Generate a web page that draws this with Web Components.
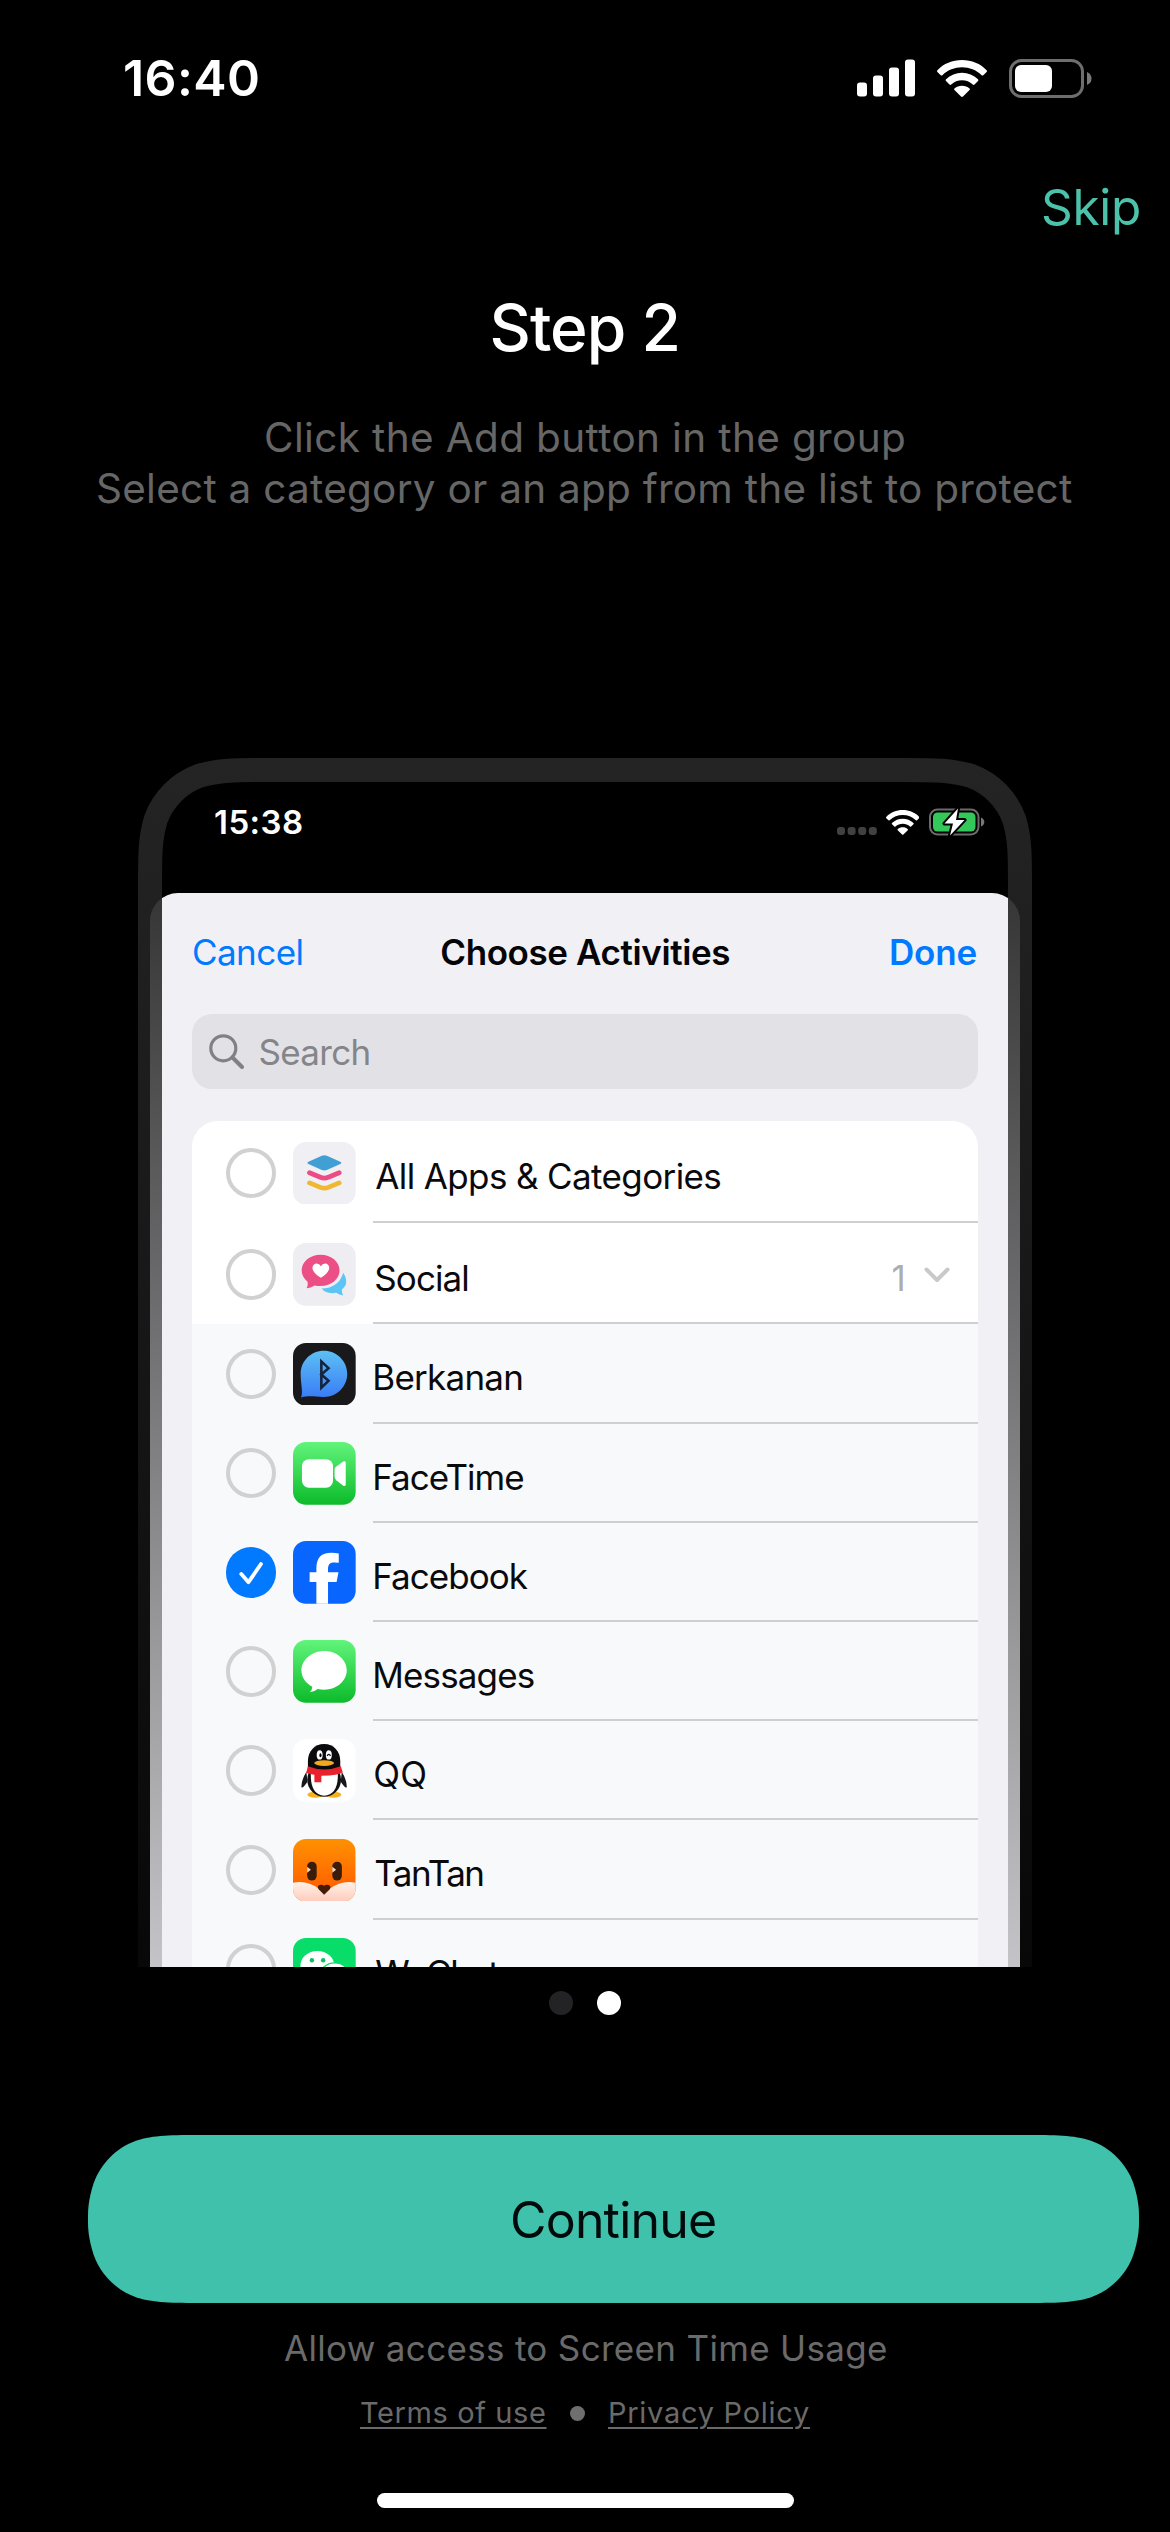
<!DOCTYPE html>
<html lang="en">
<head>
<meta charset="utf-8">
<title>Step 2</title>
<style>
html,body{margin:0;background:#000}
body{font-family:Inter,"Liberation Sans",sans-serif;width:1170px;height:2532px;overflow:hidden}
</style>
</head>
<body>
<onboarding-page></onboarding-page>
<script>
const define=(name,html,ready)=>{
  const t=document.createElement('template');
  t.innerHTML=html;
  customElements.define(name,class extends HTMLElement{
    constructor(){super();this.attachShadow({mode:'open'}).append(t.content.cloneNode(true));}
    connectedCallback(){if(ready)ready.call(this,this.shadowRoot);}
  });
};

/* A single line of text whose tracking is set so that its ink spans "width" pixels. */
const pen=document.createElement('canvas').getContext('2d');
define('fit-text',`<style>:host{display:block;flex:none;white-space:pre;font-kerning:normal}</style><slot></slot>`,function(){
  const s=getComputedStyle(this),text=this.textContent,w=+this.getAttribute('width');
  pen.font=`${s.fontWeight} ${s.fontSize} ${s.fontFamily}`;
  const m=pen.measureText(text),l=m.actualBoundingBoxLeft,r=m.actualBoundingBoxRight;
  const gap=text.length>1?(w-l-r)/(text.length-1):0;
  this.style.letterSpacing=gap+'px';
  this.style.marginLeft=l+'px';
  this.style.marginRight=(r-m.width-gap)+'px';
});

define('wifi-icon',`<style>:host{display:block}svg{display:block;width:100%;height:100%}</style>
<svg viewBox="0 0 50 37" fill="#fff"><path d="M25 0C34.500 0 43.500 3.700 49.600 10.200Q50.400 11.100 49.600 12L46.300 15.200Q45.500 16 44.600 15.200C39.200 10 32.400 7.300 25 7.300S10.800 10 5.400 15.200Q4.500 16 3.700 15.200L.4 12Q-.4 11.100 .4 10.200C6.500 3.700 15.500 0 25 0Z"/><path d="M25 12.800C31 12.800 36.600 15.100 41 19.200Q41.900 20.100 41 21L37.500 24.500Q36.700 25.300 35.800 24.500C32.900 21.800 29.100 20.300 25 20.300S17.100 21.800 14.200 24.500Q13.300 25.300 12.500 24.500L9 21Q8.100 20.100 9 19.200C13.400 15.100 19 12.800 25 12.800Z"/><path d="M25 25.700C27.900 25.700 30.500 26.700 32.500 28.500Q33.300 29.200 32.500 30L26 36.500Q25 37.400 24 36.500L17.500 30Q16.700 29.200 17.500 28.500C19.500 26.700 22.100 25.700 25 25.700Z"/></svg>`);

define('status-bar',`<style>
:host{display:flex;align-items:center;height:156px;padding:0 78px 0 125px;box-sizing:border-box;color:#fff}
fit-text{font-size:50px;font-weight:600;line-height:60px}
.r{margin-left:auto;display:flex;align-items:center}
wifi-icon{width:50px;height:37px;margin:0 22px 0 22.5px}
</style>
<fit-text width="133">16:40</fit-text>
<div class="r">
<svg width="58" height="38" fill="#fff"><rect x="0" y="23.500" width="10" height="14" rx="3"/><rect x="16" y="16.500" width="10" height="21" rx="3"/><rect x="32" y="8.500" width="10" height="29" rx="3"/><rect x="48" y=".5" width="10" height="37" rx="3"/></svg>
<wifi-icon></wifi-icon>
<svg width="83" height="39"><rect x="1.500" y="1.500" width="72" height="36" rx="11" fill="none" stroke="#6e6e6e" stroke-width="3"/><path d="M78 13Q82.500 15 82.500 19.500T78 26Z" fill="#7a7a7a"/><rect x="6" y="6" width="37" height="27" rx="6" fill="#fff"/></svg>
</div>`);

define('step-heading',`<style>
:host{display:block}
.row{display:flex;justify-content:center}
.skip{justify-content:flex-end;padding:0 31px 3px 0;box-sizing:border-box;height:105px;align-items:center;color:#4cc2aa;font-size:49.5px}
.title{height:134px;align-items:center;box-sizing:border-box;padding-bottom:2px;font-size:64px;font-weight:500;color:#fff;margin-bottom:17px}
.sub{font-size:40.500px;line-height:51px;color:#666}
</style>
<div class="row skip"><fit-text width="96">Skip</fit-text></div>
<div class="row title"><fit-text width="185">Step 2</fit-text></div>
<div class="row sub"><fit-text width="638">Click the Add button in the group</fit-text></div>
<div class="row sub"><fit-text width="974">Select a category or an app from the list to protect</fit-text></div>`);

const art={
layers:`<rect width="63" height="63" rx="13" fill="#f0eff4"/><path d="M29 13.800Q31.500 12.800 34 13.800L47.500 19.800Q49.500 21 47.500 22.200L34 28.200Q31.500 29.200 29 28.200L15.500 22.200Q13.500 21 15.500 19.800Z" fill="#419fd3"/><g fill="none" stroke-width="4.800" stroke-linecap="round" stroke-linejoin="round"><path d="M16.600 30.900L27.500 35.400Q31.500 37 35.500 35.400L46.400 30.900" stroke="#ee4b84"/><path d="M16.600 41.100L27.500 45.600Q31.500 47.200 35.500 45.600L46.400 41.100" stroke="#f0b730"/></g>`,
social:`<rect width="63" height="63" rx="13" fill="#eeedf1"/><path d="M50.500 30Q54.500 36 53 42Q51.500 45 49 47Q49 50 50.500 52.800Q45.500 51.800 43.500 50Q34 52 28.700 45.800Q46 45.500 50.500 30Z" fill="#5cc5f3"/><path d="M27.700 11.700C38.500 11.700 46.800 18.700 46.800 27.500S38.500 43.300 27.700 43.300Q24.500 43.300 21.700 42.600Q18 45 13.700 45.600Q15.300 43 14.600 39C10.900 36.100 8.700 32 8.700 27.500C8.700 18.700 17 11.700 27.700 11.700Z" fill="#ec4f86"/><path d="M28 35C15.500 27.500 19.500 20.500 23.700 20.500Q26.700 20.500 28 23.300Q29.300 20.500 32.300 20.500C36.500 20.500 40.500 27.500 28 35Z" fill="#fff"/>`,
berkanan:`<defs><linearGradient id="g" x2="0" y2="1"><stop stop-color="#5dbff3"/><stop offset="1" stop-color="#397df7"/></linearGradient></defs><rect width="63" height="63" rx="13" fill="#19191b"/><path d="M31 7.700C44 7.700 54.500 18 54.500 31S44 54.300 31 54.300C22 54.300 17 52.500 8 54.700C10.500 50 7.700 42 7.700 31C7.700 18 18 7.700 31 7.700Z" fill="url(#g)"/><path d="M28.500 18.500V45L35.700 38L28.500 31.700L35.700 25.300Z" fill="none" stroke="#16233a" stroke-width="2.600"/>`,
facetime:`<defs><linearGradient id="g" x2="0" y2="1"><stop stop-color="#62f47b"/><stop offset="1" stop-color="#0cbb2a"/></linearGradient></defs><rect width="63" height="63" rx="13" fill="url(#g)"/><rect x="9" y="17.300" width="31.200" height="28.600" rx="7" fill="#fff"/><path d="M41.800 28Q41.800 26 43.500 24.700L50.500 19.600Q53 18.500 53 21V42.500Q53 45 50.500 43.900L43.500 38.500Q41.800 37 41.800 35Z" fill="#fff"/>`,
facebook:`<rect width="63" height="63" rx="13" fill="#0866ff"/><path d="M23.500 63V41.300H16.700V31.500H23.500V28C23.500 16.500 28.500 11.800 38.500 11.800Q43 11.800 46 12.600V21.800Q44 21.500 41.700 21.500C37 21.500 35.200 23.400 35.200 28.300V31.500H45.700L43.800 41.300H35.200V63Z" fill="#fff"/>`,
messages:`<defs><linearGradient id="g" x2="0" y2="1"><stop stop-color="#62f47b"/><stop offset="1" stop-color="#0cbb2a"/></linearGradient></defs><rect width="63" height="63" rx="13" fill="url(#g)"/><path d="M31.500 11C44 11 54 19.700 54 30.500S44 50 31.500 50Q28 50 24.800 49.200Q21.500 52 16.800 52.600Q19.400 50.200 19.400 46.900C12.500 43.400 8.500 37.400 8.500 30.500C8.500 19.700 19 11 31.500 11Z" fill="#fff"/>`,
qq:`<rect width="63" height="63" rx="13" fill="#fff"/><ellipse cx="22.500" cy="56" rx="8" ry="3" fill="#f5b11e"/><ellipse cx="40.500" cy="56" rx="8" ry="3" fill="#f5b11e"/><path d="M13.500 33Q8 42 8.500 48.500Q10 50 14.500 43Z M49 33Q54.500 42 54 48.500Q52.500 50 48 43Z" fill="#15171c"/><ellipse cx="31.300" cy="41" rx="17" ry="17" fill="#111"/><path d="M31.300 5C41 5 47.500 12.500 47.500 22V31H15V22C15 12.500 21.500 5 31.300 5Z" fill="#0b0b0d"/><path d="M18 34H45Q46 56 31.300 57Q17 56 18 34Z" fill="#fff"/><path d="M15 27.500Q31 34 48 27.500L50 33.500Q46 37 28.500 37V43.500H21.500V36Q16 35.500 13.200 34Z" fill="#e9212c"/><ellipse cx="26.800" cy="16" rx="3" ry="4.700" fill="#fff"/><ellipse cx="36" cy="16" rx="3" ry="4.700" fill="#fff"/><ellipse cx="27.600" cy="16.400" rx="1.100" ry="2" /><path d="M34.300 17Q36 14 37.700 17" fill="none" stroke="#111" stroke-width="1.300"/><ellipse cx="31.300" cy="24.200" rx="10" ry="2.900" fill="#f2aa1d"/>`,
tantan:`<defs><linearGradient id="g" x2="0" y2="1"><stop stop-color="#ff9100"/><stop offset=".75" stop-color="#ff6400"/></linearGradient><linearGradient id="h" x2="0" y2="1"><stop stop-color="#fff1e8"/><stop offset="1" stop-color="#ffcbbb"/></linearGradient><clipPath id="c"><rect width="63" height="63" rx="13"/></clipPath></defs><g clip-path="url(#c)"><rect width="63" height="63" fill="url(#g)"/><path d="M0 44Q14 41 26 50L31.500 54L37 50Q49 41 63 44V63H0Z" fill="url(#h)"/></g><path d="M31.300 56L25.700 50.500Q23.500 46.500 28 46Q30.300 46 31.300 47Q32.300 46 34.600 46Q39 46.500 37 50.500Z" fill="#451c08"/><rect x="14.200" y="22.800" width="9.600" height="19" rx="4.800" fill="#3a1c0c"/><rect x="39.500" y="22.800" width="9.600" height="19" rx="4.800" fill="#3a1c0c"/><path d="M14.200 28L18 31L14.200 34Z M39.500 28L43.300 31L39.500 34Z" fill="#ffdcb8"/>`,
wechat:`<rect width="63" height="63" rx="13" fill="#07dd68"/><ellipse cx="24.500" cy="28" rx="17" ry="15" fill="#fff"/><ellipse cx="42" cy="39" rx="15.500" ry="14" fill="#fff" stroke="#07dd68" stroke-width="1.500"/><circle cx="19" cy="22.300" r="2.200" fill="#07c160"/><circle cx="30.300" cy="22.300" r="2.200" fill="#07c160"/>`
};
define('app-icon',`<style>:host{display:block;flex:none;width:62.700px;height:62.700px}svg{display:block;width:100%;height:100%}</style>`,function(root){
  const name=this.getAttribute('name');
  if(!art[name])return;
  const d=document.createElement('div');
  d.innerHTML=`<svg viewBox="0 0 63 63">${art[name]}</svg>`;
  root.append(d.firstChild);
});

define('check-mark',`<style>:host{display:block;flex:none;box-sizing:border-box;width:50.600px;height:50.600px;border:4px solid #d1d1d2;border-radius:50%}
svg{display:none}:host([checked]){border:0;background:#017aff}:host([checked]) svg{display:block}</style>
<svg width="50.600" height="50.600" viewBox="0 0 50.600 50.600" fill="none" stroke="#fff" stroke-width="3.800" stroke-linecap="round" stroke-linejoin="round"><path d="M15.300 27L22.500 35.200L35 17"/></svg>`);

define('app-row',`<style>
:host{display:flex;box-sizing:border-box;height:99.200px;padding-left:33.500px;align-items:center;background:#f8f9fb;color:#0a0a0c}
:host([category]){height:101.700px;padding-top:2px;background:#fff}
app-icon{margin:0 17px}
.body{flex:1;align-self:stretch;display:flex;align-items:center;box-sizing:border-box;border-bottom:2px solid #cfcfd1;padding:9px 28px 0 2.500px;font-size:35px;line-height:44px}
.end{margin-left:auto;display:flex;align-items:center}
</style>
<check-mark></check-mark><app-icon></app-icon>
<div class="body"><slot></slot><div class="end"><slot name="end"></slot></div></div>`);

const rows=[['layers','All Apps &amp; Categories',345,1],['social','Social',92,1],['berkanan','Berkanan',146],['facetime','FaceTime',148],['facebook','Facebook',152.5],['messages','Messages',158.5],['qq','QQ',50],['tantan','TanTan',107],['wechat','WeChat',124]];

define('search-field',`<style>
:host{display:flex;align-items:center;height:75px;border-radius:20px;background:#e2e1e6;color:#858589;font-size:35px;padding-left:16.500px;box-sizing:border-box}
svg{display:block;margin:0 16px 0 0}
</style>
<svg width="35" height="35" fill="none" stroke="#818185" stroke-width="3.200"><circle cx="14.300" cy="14.300" r="12.500"/><path d="M23.500 23.500L33 33" stroke-width="4" stroke-linecap="round"/></svg>
<fit-text width="109">Search</fit-text>`);

define('activity-sheet',`<style>
:host{display:block;background:#f1f0f5;border-radius:28px 28px 0 0;padding:0 42.500px 0 42px;height:1074px;box-sizing:border-box;overflow:hidden}
header{display:grid;grid-template-columns:1fr auto 1fr;align-items:center;height:118px;margin-bottom:3px;font-size:35px;font-weight:600;color:#007aff;padding:0 1px 0 2px}
header .t{color:#050507}header .c{font-weight:400;justify-self:start}header .d{justify-self:end}
.list{display:block;margin-top:32px;border-radius:26px 26px 0 0;overflow:hidden}
</style>
<header><fit-text class="c" width="107.500">Cancel</fit-text><fit-text class="t" width="288">Choose Activities</fit-text><fit-text class="d" width="85.500">Done</fit-text></header>
<search-field></search-field>
<div class="list"></div>`,function(root){
  root.querySelector('.list').innerHTML=rows.map(([id,label,w,cat])=>`<app-row name="${id}"${cat?' category':''}><fit-text width="${w}">${label}</fit-text>${id==='social'?'<fit-text slot="end" width="10" style="color:#adadb0;margin-right:24px">1</fit-text><svg slot="end" width="26" height="17" style="margin:-6px 0 0 20px" fill="none" stroke="#c9c9cb" stroke-width="4" stroke-linecap="round" stroke-linejoin="round"><path d="M2.500 2.500L13 13L23.500 2.500"/></svg>':''}</app-row>`).join('');
  root.querySelectorAll('app-row').forEach(r=>{
    const s=r.shadowRoot,old=s.querySelector('app-icon'),i=document.createElement('app-icon');
    i.setAttribute('name',r.getAttribute('name'));
    old.replaceWith(i);
    s.querySelector('check-mark').toggleAttribute('checked',r.getAttribute('name')==='facebook');
  });
});

define('phone-preview',`<style>
:host{display:block;position:relative;width:894px;height:1209px;margin:0 auto;padding:0 12px;box-sizing:border-box;overflow:hidden}
.bar{height:135px;display:flex;align-items:center;box-sizing:border-box;padding:0 35px 7px 65px;color:#fff;font-size:33px;font-weight:600;line-height:40px}
.r{display:flex;margin-left:auto;align-items:center}
wifi-icon{width:33.500px;height:25px;margin:0 10px 0 9px}
.frame{position:absolute;left:0;top:0;pointer-events:none}
</style>
<div class="bar"><fit-text width="87">15:38</fit-text><div class="r">
<svg width="40" height="8" style="margin-top:18px" fill="#414143"><rect width="8" height="8" rx="3"/><rect x="10.600" width="8" height="8" rx="3"/><rect x="21.200" width="8" height="8" rx="3"/><rect x="31.800" width="8" height="8" rx="3"/></svg>
<wifi-icon></wifi-icon>
<svg width="56" height="28"><rect x="1" y="1.500" width="48.500" height="25" rx="7.500" fill="none" stroke="#6b6b6b" stroke-width="2"/><path d="M52 9.500Q55.300 11 55.300 14T52 18.500Z" fill="#777"/><rect x="4" y="4.500" width="42.500" height="19" rx="4.500" fill="#34c759"/><path d="M29 .5L15.500 15.500H24L21 27.500L35.500 12H27Z" fill="#fff" stroke="#000" stroke-width="4" stroke-linejoin="round" paint-order="stroke"/></svg>
</div></div>
<activity-sheet></activity-sheet>
<svg class="frame" width="894" height="1209" fill="none"><defs><linearGradient id="f" gradientUnits="userSpaceOnUse" x1="0" y1="0" x2="0" y2="1209"><stop stop-color="#242424"/><stop offset="1" stop-color="#242424" stop-opacity=".22"/></linearGradient></defs><path d="M12 1230V131C12 97 12 79.700 17.800 61.300C25.200 41.100 41.100 25.200 61.300 17.800C79.700 12 97 12 131 12H763C797 12 814.300 12 832.700 17.800C852.900 25.200 868.800 41.100 876.200 61.300C882 79.700 882 97 882 131V1230" stroke="url(#f)" stroke-width="24"/></svg>`);

define('page-dots',`<style>:host{display:flex;justify-content:center;gap:24px;height:24px;margin-top:24px}i{width:24px;height:24px;border-radius:50%;background:#232325}i+i{background:#fff}</style><i></i><i></i>`);

define('continue-button',`<style>
:host{display:flex;margin:120px 31px 0 88px;height:168px;align-items:center;justify-content:center;box-sizing:border-box;padding-top:2px;background:#40c1ab;color:#000a0a;font-size:50px;
clip-path:path('M0 84C0 75 0 66 5.7 48C12.8 28.3 28.3 12.8 48 5.7C66 0 82.7 0 116 0H935C968.3 0 985 0 1003 5.7C1022.7 12.8 1038.2 28.3 1045.300 48C1051 66 1051 75 1051 84S1051 102 1045.300 120C1038.2 139.700 1022.7 155.200 1003 162.300C985 168 968.3 168 935 168H116C82.700 168 66 168 48 162.300C28.300 155.200 12.800 139.700 5.700 120C0 102 0 93 0 84Z')}
</style><fit-text width="203">Continue</fit-text>`);

define('legal-footer',`<style>
:host{display:flex;flex-direction:column;align-items:center;color:#6a6a6a}
.a{font-size:35px;line-height:44px;margin-top:23px}
.l{display:flex;align-items:center;font-size:29px;line-height:36px;margin-top:25px;height:36px}
.l fit-text{text-decoration:underline;text-decoration-thickness:2px;text-underline-offset:4px}
i{width:15px;height:15px;border-radius:50%;background:#6f6f6f;margin:0 25px}
.home{width:417px;height:15px;border-radius:8px;background:#fff;margin-top:62px}
</style>
<fit-text class="a" width="602">Allow access to Screen Time Usage</fit-text>
<div class="l"><fit-text width="184">Terms of use</fit-text><i></i><fit-text width="199">Privacy Policy</fit-text></div>
<div class="home"></div>`);

define('onboarding-page',`<style>:host{display:flex;flex-direction:column;width:1170px;height:2532px;background:#000}step-heading{height:602px}</style>
<status-bar></status-bar><step-heading></step-heading><phone-preview></phone-preview><page-dots></page-dots><continue-button></continue-button><legal-footer></legal-footer>`);
</script>
</body>
</html>
